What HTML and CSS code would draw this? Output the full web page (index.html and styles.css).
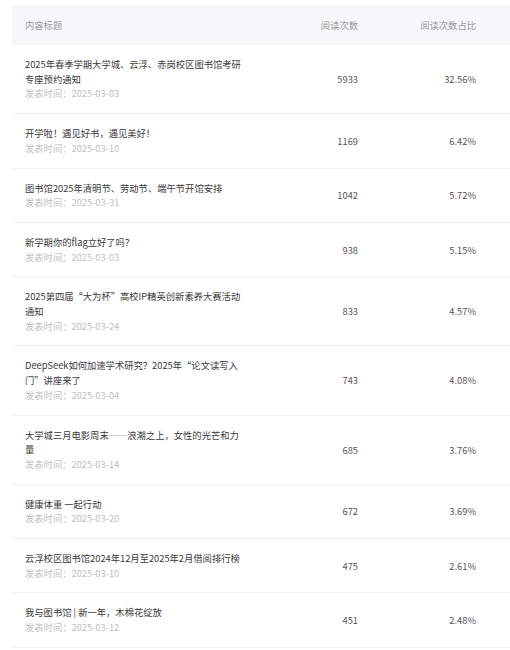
FILE: index.html
```html
<!DOCTYPE html>
<html lang="zh-CN">
<head>
<meta charset="utf-8">
<title>阅读统计</title>
<link rel="stylesheet" href="styles.css">
</head>
<body>
<div class="wrap">
  <div class="table">
    <div class="row head">
      <div class="c-title">内容标题</div>
      <div class="c-num">阅读次数</div>
      <div class="c-num">阅读次数占比</div>
      <div></div>
    </div>
    <div class="row">
      <div class="c-title"><div class="t">2025年春季学期大学城、云浮、赤岗校区图书馆考研专座预约通知</div><div class="d">发表时间：2025-03-03</div></div>
      <div class="c-num">5933</div><div class="c-num">32.56%</div><div></div>
    </div>
    <div class="row">
      <div class="c-title"><div class="t">开学啦！遇见好书，遇见美好！</div><div class="d">发表时间：2025-03-10</div></div>
      <div class="c-num">1169</div><div class="c-num">6.42%</div><div></div>
    </div>
    <div class="row">
      <div class="c-title"><div class="t">图书馆2025年清明节、劳动节、端午节开馆安排</div><div class="d">发表时间：2025-03-31</div></div>
      <div class="c-num">1042</div><div class="c-num">5.72%</div><div></div>
    </div>
    <div class="row">
      <div class="c-title"><div class="t">新学期你的flag立好了吗？</div><div class="d">发表时间：2025-03-03</div></div>
      <div class="c-num">938</div><div class="c-num">5.15%</div><div></div>
    </div>
    <div class="row">
      <div class="c-title"><div class="t">2025第四届“大为杯”高校IP精英创新素养大赛活动通知</div><div class="d">发表时间：2025-03-24</div></div>
      <div class="c-num">833</div><div class="c-num">4.57%</div><div></div>
    </div>
    <div class="row">
      <div class="c-title"><div class="t">DeepSeek如何加速学术研究？2025年“论文读写入门”讲座来了</div><div class="d">发表时间：2025-03-04</div></div>
      <div class="c-num">743</div><div class="c-num">4.08%</div><div></div>
    </div>
    <div class="row">
      <div class="c-title"><div class="t">大学城三月电影周末——浪潮之上，女性的光芒和力量</div><div class="d">发表时间：2025-03-14</div></div>
      <div class="c-num">685</div><div class="c-num">3.76%</div><div></div>
    </div>
    <div class="row">
      <div class="c-title"><div class="t">健康体重 一起行动</div><div class="d">发表时间：2025-03-20</div></div>
      <div class="c-num">672</div><div class="c-num">3.69%</div><div></div>
    </div>
    <div class="row">
      <div class="c-title"><div class="t">云浮校区图书馆2024年12月至2025年2月借阅排行榜</div><div class="d">发表时间：2025-03-10</div></div>
      <div class="c-num">475</div><div class="c-num">2.61%</div><div></div>
    </div>
    <div class="row">
      <div class="c-title"><div class="t">我与图书馆 | 新一年，木棉花绽放</div><div class="d">发表时间：2025-03-12</div></div>
      <div class="c-num">451</div><div class="c-num">2.48%</div><div></div>
    </div>
  </div>
</div>
</body>
</html>
```
FILE: styles.css
```css
html, body {
  margin: 0;
  padding: 0;
  background: #fff;
}
body {
  font-family: "Noto Sans CJK SC", "Noto Sans", sans-serif;
  font-size: 9.3px;
  color: #333;
  overflow: hidden;
}
.wrap {
  padding: 5px 0 0 12px;
}
.table {
  width: 498px;
}
.row {
  display: grid;
  grid-template-columns: 246px 100px 118px 1fr;
  align-items: center;
  border-bottom: 1px solid #eeeeee;
}
.row.head {
  background: #f6f7f9;
  height: 40px;
  border-bottom: none;
  color: #999;
}
.c-title {
  padding: 12px 11px 12px 13px;
  line-height: 14.7px;
}
.head .c-title {
  padding-top: 0;
  padding-bottom: 0;
}
.c-num {
  text-align: right;
  color: #555;
}
.head .c-num {
  color: #999;
}
.t {
  color: #3a3a3a;
}
.d {
  color: #c0c0c0;
}
```
